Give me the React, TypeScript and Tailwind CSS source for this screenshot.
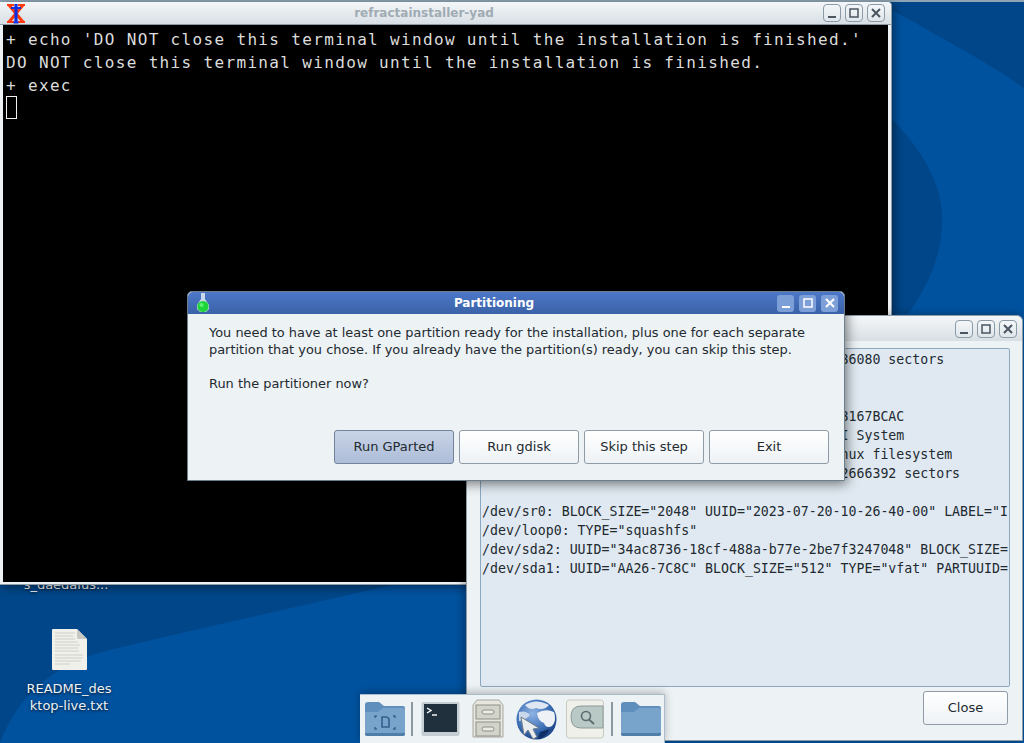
import type { ReactNode } from 'react';

// Desktop screenshot: terminal, output viewer, partitioning dialog and dock

const SANS = 'font-["DejaVu_Sans",sans-serif]';

const outputLines = [
  'Disk /dev/sda: 20 GiB, 21474836480 bytes, 41986080 sectors',
  'Units: sectors',
  'Sector size: 512 bytes',
  'Disk identifier: 0A1B2C3D-4E5F-6A7B-8C9D-0E1F8167BCAC',
  '/dev/sda1    2048   1050623   1048576 512M EFI System',
  '/dev/sda2 1050624  41940991  40890368  19G Linux filesystem',
  'Disk /dev/loop0: 1.27 GiB, 1365192704 bytes, 2666392 sectors',
  '',
  '/dev/sr0: BLOCK_SIZE="2048" UUID="2023-07-20-10-26-40-00" LABEL="I',
  '/dev/loop0: TYPE="squashfs"',
  '/dev/sda2: UUID="34ac8736-18cf-488a-b77e-2be7f3247048" BLOCK_SIZE=',
  '/dev/sda1: UUID="AA26-7C8C" BLOCK_SIZE="512" TYPE="vfat" PARTUUID=',
];

function Wallpaper() {
  return (
    <svg className="absolute inset-0" width="1024" height="743" viewBox="0 0 1024 743">
      <rect width="1024" height="743" fill="#004688" />
      <path
        d="M885 6 C930 32 985 60 1024 88 V743 H0 C20 690 60 662 110 650 C200 628 330 600 500 560 L885 300 Z"
        fill="#00529f"
      />
      <path d="M885 112 C925 150 945 190 942 226 C940 262 925 290 908 314 H885 Z" fill="#004688" />
      <rect width="1024" height="2" fill="#8fa5b5" />
    </svg>
  );
}

function WindowButton({ kind, tone }: { kind: 'min' | 'max' | 'close'; tone: 'light' | 'blue' }) {
  const blue = tone === 'blue';
  const ink = blue ? '#ffffff' : '#4a5560';
  return (
    <div
      className={
        blue
          ? 'w-[17px] h-[17px] rounded-[3px] bg-[#7d9fd8] flex items-center justify-center'
          : 'w-[18px] h-[18px] rounded-[4px] border border-[#8a9aa6] bg-gradient-to-b from-[#f4f7f9] to-[#dfe6ea] flex items-center justify-center'
      }
    >
      <svg width="12" height="12" viewBox="0 0 12 12" fill="none" stroke={ink}>
        {kind === 'min' && <path d="M2 10 H10" strokeWidth="2" />}
        {kind === 'max' && <rect x="2" y="2" width="8" height="8" strokeWidth="1.5" />}
        {kind === 'close' && <path d="M2 2 L10 10 M10 2 L2 10" strokeWidth="2" />}
      </svg>
    </div>
  );
}

function XTermIcon() {
  return (
    <svg width="20" height="21" viewBox="0 0 20 21" fill="none">
      <path d="M3 2 L17 19 M17 2 L3 19" stroke="#ff3c10" strokeWidth="3" />
      <path d="M1 2 H8 M12 2 H19 M1 19 H8 M12 19 H19" stroke="#ff3c10" strokeWidth="2.2" />
      <path d="M10 1 V20" stroke="#1030e0" strokeWidth="3.2" />
      <path d="M5 5 H15 M7.5 19.5 H12.5" stroke="#1030e0" strokeWidth="1.8" />
    </svg>
  );
}

function FlaskIcon() {
  return (
    <svg width="14" height="20" viewBox="0 0 14 20">
      <path d="M5 0 H9 V6 L13 12 V16 L10 19 H4 L1 16 V12 L5 6 Z" fill="#c6d8ea" />
      <circle cx="7" cy="13.5" r="5.6" fill="#1fd43a" />
      <circle cx="5.5" cy="12" r="2" fill="#5cf070" />
    </svg>
  );
}

function Folder({ badge }: { badge?: boolean }) {
  return (
    <svg width="42" height="38" viewBox="0 0 42 38">
      <path d="M1 5 Q1 2 4 2 H15 L20 6 H39 Q41 6 41 8 V20 H1 Z" fill="#5f8fbc" />
      <path d="M1 12 H14 L19 8 H39 Q41 8 41 10 V34 Q41 36 39 36 H3 Q1 36 1 34 Z" fill="#78a3cb" />
      <path d="M1 34 Q1 36 3 36 H39 Q41 36 41 34 V33 H1 Z" fill="#4f7ea9" />
      {badge && (
        <g fill="none" stroke="#34618c">
          <path d="M18 17 H23 L25 19 V27 H18 Z" strokeWidth="1.6" />
          <path d="M11 18 V16 H13 M11 27 V29 H13 M31 18 V16 H29 M31 27 V29 H29" strokeWidth="1.4" />
        </g>
      )}
    </svg>
  );
}

function TerminalIcon() {
  return (
    <svg width="39" height="38" viewBox="0 0 39 38">
      <rect x="0.5" y="2" width="38" height="34" rx="2" fill="#c4cdd2" />
      <rect x="3" y="4" width="33" height="28" fill="#20303c" />
      <path d="M6 8 L10 10.5 L6 13" fill="none" stroke="#ffffff" strokeWidth="1.4" />
      <path d="M11 15 H16" stroke="#ffffff" strokeWidth="1.4" />
    </svg>
  );
}

function CabinetIcon() {
  return (
    <svg width="32" height="40" viewBox="0 0 32 40">
      <path d="M5 1 H27 L31 6 V38 H1 V6 Z" fill="#e6e6de" stroke="#a8a8a0" />
      <rect x="4" y="6" width="24" height="14" fill="#d2d3cb" stroke="#8f8f87" />
      <rect x="4" y="23" width="24" height="14" fill="#d2d3cb" stroke="#8f8f87" />
      <rect x="10" y="11" width="12" height="4" rx="2" fill="#ecece6" stroke="#8f8f87" />
      <rect x="10" y="28" width="12" height="4" rx="2" fill="#ecece6" stroke="#8f8f87" />
    </svg>
  );
}

function GlobeIcon() {
  return (
    <svg width="41" height="41" viewBox="0 0 41 41">
      <defs>
        <radialGradient id="globe-sea" cx="40%" cy="35%" r="70%">
          <stop offset="0%" stopColor="#8fb4e4" />
          <stop offset="60%" stopColor="#3f72b8" />
          <stop offset="100%" stopColor="#173f80" />
        </radialGradient>
      </defs>
      <circle cx="20.5" cy="20.5" r="20" fill="url(#globe-sea)" />
      <path d="M9 6 Q20 -1 33 6 Q28 12 20 9 Q14 12 9 6 Z" fill="#dfe7f2" />
      <path d="M21 14 Q30 9 38 13 Q41 22 36 27 Q30 30 28 24 Q22 22 21 14 Z" fill="#eef1f5" />
      <path d="M3 13 Q10 11 14 16 Q10 21 3 22 Z" fill="#c9d7ea" />
      <path d="M24 33 L34 30 Q30 38 22 40 Z" fill="#0f2f66" />
      <path
        d="M5 18 L8 36 L12 31 L17 40 L21 38 L17 30 L23 29 Z"
        fill="#e9edf0"
        stroke="#6f7b85"
        strokeWidth="1"
      />
    </svg>
  );
}

function SearchIcon() {
  return (
    <svg width="38" height="40" viewBox="0 0 38 40">
      <rect x="0.5" y="1" width="37" height="38" rx="3" fill="#f0f0ea" stroke="#c9c9c2" />
      <path d="M37 7 H15 Q5 7 5 18 Q5 29 15 29 H37 Z" fill="#b9c9c6" stroke="#8d9a98" />
      <circle cx="20" cy="17" r="4.5" fill="none" stroke="#5d6a70" strokeWidth="1.6" />
      <path d="M23 20.5 L28 25" stroke="#5d6a70" strokeWidth="1.8" />
    </svg>
  );
}

function DocumentIcon() {
  return (
    <svg width="37" height="43" viewBox="0 0 37 43">
      <path d="M1.5 1 H26 L36 11 V41 Q36 42 35 42 H2 Q1 42 1 41 V2 Z" fill="#f1f1ec" />
      <path d="M26 1 L36 11 H28 Q26 11 26 9 Z" fill="#c9c9c3" />
      <g stroke="#cfcfc9" strokeWidth="1">
        <path d="M4 5 H24 M4 8 H22 M4 11 H24 M4 14 H27 M4 17 H29 M4 20 H27 M4 23 H28 M4 27 H32 M4 30 H32 M4 33 H30 M4 36 H19" />
      </g>
    </svg>
  );
}

function DesktopLabel({ children }: { children: ReactNode }) {
  return (
    <div className={`${SANS} text-[13px] leading-[17px] text-center text-[#eef2f6] [text-shadow:0_1px_3px_rgba(0,0,0,0.8)]`}>
      {children}
    </div>
  );
}

function LightTitleBar({ title, className }: { title?: string; className: string }) {
  return (
    <div className={`relative flex items-center justify-end bg-gradient-to-b from-[#f4f7f9] to-[#d8dfe4] ${className}`}>
      {title && (
        <div className={`${SANS} absolute inset-x-0 pr-[43px] text-center text-[12px] font-bold text-[#a0abb3]`}>{title}</div>
      )}
      <div className="relative flex gap-[4px]">
        <WindowButton kind="min" tone="light" />
        <WindowButton kind="max" tone="light" />
        <WindowButton kind="close" tone="light" />
      </div>
    </div>
  );
}

function DialogButton({ label, primary }: { label: string; primary?: boolean }) {
  return (
    <div
      className={
        primary
          ? `${SANS} w-[120px] h-[34px] flex items-center justify-center rounded-[3px] border border-[#74839a] bg-gradient-to-b from-[#c8d3e6] to-[#adbdd8] text-[13px] text-[#222a30]`
          : `${SANS} w-[120px] h-[34px] flex items-center justify-center rounded-[3px] border border-[#8f9ca8] bg-gradient-to-b from-white to-[#eef2f5] text-[13px] text-[#222a30]`
      }
    >
      {label}
    </div>
  );
}

function TerminalWindow() {
  return (
    <div className="absolute left-0 top-[2px] w-[892px] h-[583px] flex flex-col rounded-tr-[4px] border-r border-b border-[#8f9da8] bg-[#edf1f4] shadow-[2px_2px_10px_rgba(0,0,0,0.45)]">
      <LightTitleBar title="refractainstaller-yad" className="h-[23px] pr-[6px] rounded-tr-[4px] border-b border-[#8a99a4]" />
      <div className="absolute left-[6px] top-[1px]">
        <XTermIcon />
      </div>
      <div className="flex-1 mx-[3px] mb-[2px] bg-black pl-[3px] pt-[3px] font-['DejaVu_Sans_Mono',monospace] text-[16px] tracking-[1.34px] leading-[23px] text-[#dcdcdc] whitespace-pre overflow-hidden">
        <div>+ echo 'DO NOT close this terminal window until the installation is finished.'</div>
        <div>DO NOT close this terminal window until the installation is finished.</div>
        <div>+ exec</div>
        <div className="w-[11px] h-[23px] -mt-px border border-[#f0f0f0]" />
      </div>
    </div>
  );
}

function OutputWindow() {
  return (
    <div className="absolute left-[466px] top-[315px] w-[557px] h-[426px] flex flex-col rounded-tr-[6px] border border-[#8f9da8] bg-[#edf2f5] shadow-[-2px_0_10px_rgba(0,0,0,0.35)]">
      <LightTitleBar className="h-[25px] pr-[5px] rounded-tr-[6px]" />
      <div className="ml-[13px] mt-[7px] w-[530px] h-[339px] border border-[#8aa9c0] rounded-[2px] bg-[#e0e9f1] pt-[1px] overflow-hidden">
        <div className="pl-[1px] font-['DejaVu_Sans_Mono',monospace] text-[13.24px] leading-[19px] text-[#222a30] whitespace-pre">
          {outputLines.map((line, i) => (
            <div key={i} className="h-[19px]">{line}</div>
          ))}
        </div>
      </div>
      <div className="flex justify-end pr-[14px] pt-[4px]">
        <div className={`${SANS} w-[85px] h-[34px] flex items-center justify-center rounded-[3px] border border-[#8f9ca8] bg-gradient-to-b from-white to-[#eef2f5] text-[13px] text-[#222a30]`}>
          Close
        </div>
      </div>
    </div>
  );
}

function PartitionDialog() {
  return (
    <div className="absolute left-[187px] top-[291px] w-[658px] h-[190px] flex flex-col rounded-t-[5px] border border-[#6e7f8c] bg-[#edf2f5] shadow-[2px_3px_12px_rgba(0,0,0,0.5)]">
      <div className="relative h-[22px] flex items-center justify-between rounded-t-[5px] bg-gradient-to-b from-[#4d78c8] to-[#3a62a8] pl-[8px] pr-[6px]">
        <FlaskIcon />
        <div className={`${SANS} absolute inset-x-0 pr-[44px] text-center text-[12px] font-bold text-white`}>Partitioning</div>
        <div className="relative flex gap-[5px]">
          <WindowButton kind="min" tone="blue" />
          <WindowButton kind="max" tone="blue" />
          <WindowButton kind="close" tone="blue" />
        </div>
      </div>
      <div className={`${SANS} pl-[21px] pt-[10px] text-[12.93px] leading-[17px] text-[#222a30] whitespace-pre`}>
        <div>You need to have at least one partition ready for the installation, plus one for each separate</div>
        <div>partition that you chose. If you already have the partition(s) ready, you can skip this step.</div>
        <div className="mt-[17px]">Run the partitioner now?</div>
      </div>
      <div className="flex justify-end gap-[5px] pr-[15px] mt-[38px]">
        <DialogButton label="Run GParted" primary />
        <DialogButton label="Run gdisk" />
        <DialogButton label="Skip this step" />
        <DialogButton label="Exit" />
      </div>
    </div>
  );
}

function Dock() {
  return (
    <div className="absolute left-[360px] bottom-0 w-[305px] h-[49px] flex items-center pl-[4px] border-t border-r border-[#a9bccb] bg-[#edf2f5] shadow-[0_-2px_8px_rgba(0,0,0,0.25)]">
      <Folder badge />
      <div className="w-[2px] h-[34px] ml-[5px] bg-[#8d979e]" />
      <div className="ml-[8px]"><TerminalIcon /></div>
      <div className="ml-[12px]"><CabinetIcon /></div>
      <div className="ml-[12px]"><GlobeIcon /></div>
      <div className="ml-[9px]"><SearchIcon /></div>
      <div className="w-[2px] h-[34px] ml-[7px] bg-[#8d979e]" />
      <div className="ml-[7px]"><Folder /></div>
    </div>
  );
}

export default function App() {
  return (
    <div className="relative w-[1024px] h-[743px] overflow-hidden">
      <Wallpaper />

      {/* desktop icons */}
      <div className="absolute left-[10px] top-[576px] w-[112px]">
        <DesktopLabel>s_daedalus...</DesktopLabel>
      </div>
      <div className="absolute left-[19px] top-[628px] w-[100px] flex flex-col items-center">
        <DocumentIcon />
        <div className="mt-[9px]">
          <DesktopLabel>
            README_des
            <br />
            ktop-live.txt
          </DesktopLabel>
        </div>
      </div>

      <TerminalWindow />
      <OutputWindow />
      <PartitionDialog />
      <Dock />
    </div>
  );
}
